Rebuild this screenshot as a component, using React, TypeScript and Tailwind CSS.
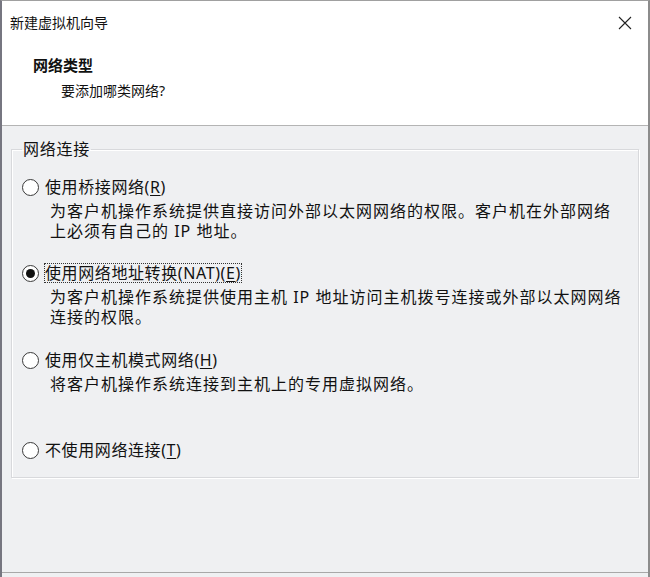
import React from 'react';

interface Choice {
  id: string;
  label: string;
  key: string;
  lines: string[];
}

const choices: Choice[] = [
  {
    id: 'bridged',
    label: '使用桥接网络',
    key: 'R',
    lines: ['为客户机操作系统提供直接访问外部以太网网络的权限。客户机在外部网络', '上必须有自己的 IP 地址。'],
  },
  {
    id: 'nat',
    label: '使用网络地址转换(NAT)',
    key: 'E',
    lines: ['为客户机操作系统提供使用主机 IP 地址访问主机拨号连接或外部以太网网络', '连接的权限。'],
  },
  {
    id: 'host',
    label: '使用仅主机模式网络',
    key: 'H',
    lines: ['将客户机操作系统连接到主机上的专用虚拟网络。'],
  },
  {
    id: 'none',
    label: '不使用网络连接',
    key: 'T',
    lines: [],
  },
];

function Radio({ checked }: { checked: boolean }) {
  return (
    <span className="w-[17px] h-[17px] rounded-full border border-[#3a3a3a] bg-white flex items-center justify-center shrink-0">
      {checked && <span className="w-[9px] h-[9px] rounded-full bg-[#111]" />}
    </span>
  );
}

export default function App() {
  const selected = 'nat';

  return (
    <div className="w-[650px] h-[577px] flex flex-col bg-[#eff0f2] border-t border-l-2 border-r-2 border-t-[#a0a0a0] border-l-[#767680] border-r-[#8c8c8c] text-[#111] font-['Noto_Sans','Noto_Sans_CJK_SC',sans-serif] overflow-hidden">
      {/* Header */}
      <div className="h-[125px] bg-white border-b border-[#b4b4b4] shrink-0">
        <div className="flex items-center justify-between h-[44px] pl-[8px] pr-[16px]">
          <span className="text-[14px] leading-[20px]">新建虚拟机向导</span>
          <svg width="14" height="14" viewBox="0 0 14 14" className="text-[#222]">
            <path d="M1 1 L13 13 M13 1 L1 13" stroke="currentColor" strokeWidth="1.1" fill="none" />
          </svg>
        </div>
        <div className="pl-[31px] mt-[10px] text-[15px] leading-[20px] font-bold">网络类型</div>
        <div className="pl-[59px] mt-[6px] text-[14px] leading-[20px]">要添加哪类网络?</div>
      </div>

      {/* Body */}
      <div className="flex-1 pt-[13px] px-[9px]">
        <fieldset className="border border-[#d8d9dc] shadow-[inset_1px_1px_0_#fff,1px_1px_0_#fff] pl-[10px] pr-[10px] pt-[18px] pb-[17px]">
          <legend className="px-[1px] text-[16px] leading-[20px] tracking-[0.75px]">网络连接</legend>
          {choices.map((c, i) => (
            <div
              key={c.id}
              className={i === 0 ? '' : i === 3 ? 'mt-[46px]' : i === 2 ? 'mt-[23px]' : 'mt-[22px]'}
            >
              <div className="flex items-center gap-[5px] h-[20px]">
                <Radio checked={c.id === selected} />
                <span
                  className={
                    'text-[16px] leading-[20px] tracking-[0.6px] whitespace-nowrap px-[1px] ' +
                    (c.id === selected ? 'outline outline-1 outline-dotted outline-[#333] -outline-offset-1' : '')
                  }
                >
                  {c.label}(<span className="underline underline-offset-2">{c.key}</span>)
                </span>
              </div>
              {c.lines.length > 0 && (
                <div className="mt-[4px] pl-[28px]">
                  {c.lines.map((line) => (
                    <div key={line} className="text-[16px] leading-[20px] tracking-[1px] whitespace-nowrap">
                      {line}
                    </div>
                  ))}
                </div>
              )}
            </div>
          ))}
        </fieldset>
      </div>

      {/* Footer separator */}
      <div className="h-[5px] border-t border-[#a8a8a8] shrink-0" />
    </div>
  );
}
